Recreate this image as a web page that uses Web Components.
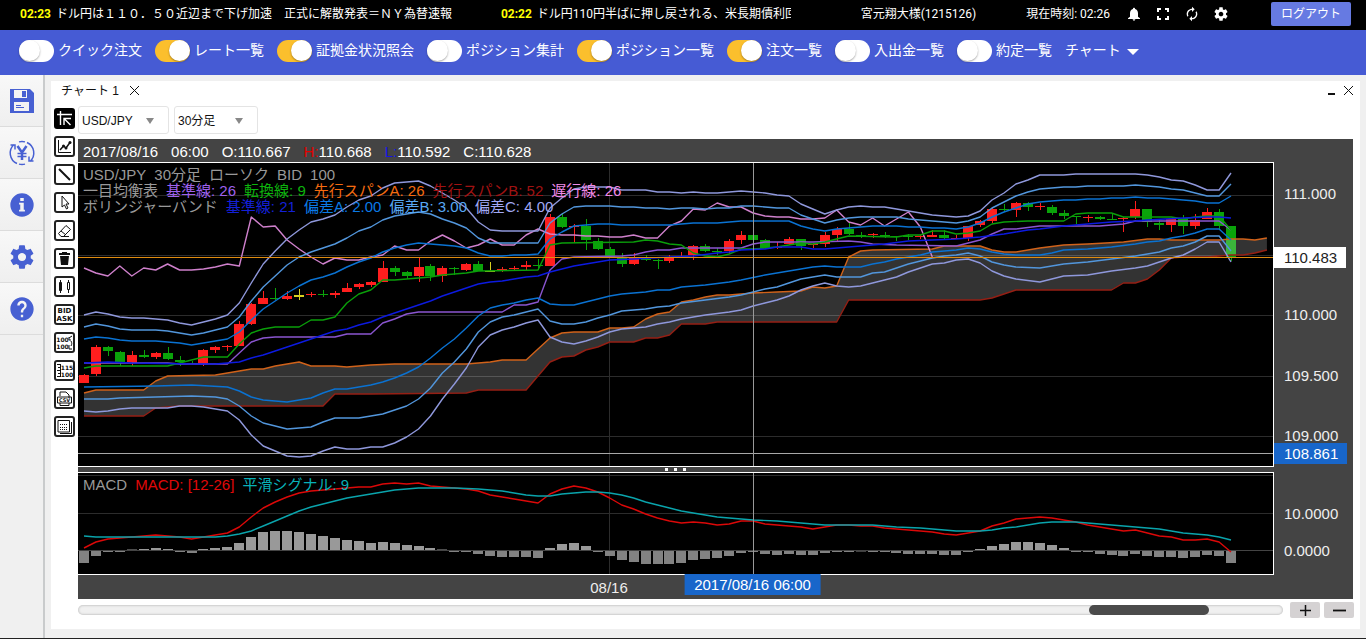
<!DOCTYPE html>
<html lang="ja">
<head>
<meta charset="utf-8">
<title>チャート</title>
<style>
  html, body { margin: 0; height: 100%; }
  body { font-family: Roboto, "Liberation Sans", "Noto Sans CJK JP", sans-serif; font-size: 12px; background: #f0f0f0; color: #222; }
</style>
</head>
<body>
<trade-app></trade-app>

<script>
const define = (name, html, setup) => {
  const template = document.createElement('template');
  template.innerHTML = html;
  customElements.define(name, class extends HTMLElement {
    constructor() {
      super();
      this.attachShadow({ mode: 'open' }).append(template.content.cloneNode(true));
    }
    connectedCallback() { if (setup) setup(this, this.shadowRoot); }
  });
};

const GEAR = 'M19.43 12.98c.04-.32.07-.64.07-.98s-.03-.66-.07-.98l2.11-1.65c.19-.15.24-.42.12-.64l-2-3.46c-.12-.22-.39-.3-.61-.22l-2.49 1c-.52-.4-1.08-.73-1.69-.98l-.38-2.65C14.46 2.18 14.25 2 14 2h-4c-.25 0-.46.18-.49.42l-.38 2.65c-.61.25-1.17.59-1.69.98l-2.49-1c-.23-.09-.49 0-.61.22l-2 3.46c-.13.22-.07.49.12.64l2.11 1.65c-.04.32-.07.65-.07.98s.03.66.07.98l-2.11 1.65c-.19.15-.24.42-.12.64l2 3.46c.12.22.39.3.61.22l2.49-1c.52.4 1.08.73 1.69.98l.38 2.65c.03.24.24.42.49.42h4c.25 0 .46-.18.49-.42l.38-2.65c.61-.25 1.17-.59 1.69-.98l2.49 1c.23.09.49 0 .61-.22l2-3.46c.12-.22.07-.49-.12-.64l-2.11-1.65zM12 15.5c-1.93 0-3.5-1.57-3.5-3.5s1.57-3.5 3.5-3.5 3.5 1.57 3.5 3.5-1.57 3.5-3.5 3.5z';

/* ---------- header ---------- */
define('news-item', `
  <style>
    :host { display: flex; gap: 5px; flex: none; white-space: nowrap; }
    slot[name=time]::slotted(*) { color: #ff0; font-weight: 700; }
  </style>
  <slot name="time"></slot><span><slot></slot></span>`);

define('app-header', `
  <style>
    :host { display: flex; align-items: center; height: 30px; box-sizing: border-box; padding: 0 15px 2px 20px; background: #000; color: #fff; line-height: 16px; }
    .ticker { display: flex; gap: 49px; flex: 1; min-width: 0; overflow: hidden; }
    .user { margin-left: 70px; }
    .clock { margin: 0 16px 0 50px; }
    .user, .clock { white-space: nowrap; }
    .icons { display: flex; gap: 13px; margin-right: 42px; }
    .icons button { all: unset; display: block; width: 16px; height: 16px; }
    svg { display: block; width: 16px; height: 16px; fill: #fff; }
    .logout { width: 80px; height: 24px; padding: 0; border: 0; border-radius: 2px; background: #667ae2; color: #fff; font: inherit; }
  </style>
  <div class="ticker">
    <news-item><time slot="time">02:23</time>ドル円は１１０．５０近辺まで下げ加速　正式に解散発表＝ＮＹ為替速報</news-item>
    <news-item><time slot="time">02:22</time>ドル円110円半ばに押し戻される、米長期債利回</news-item>
  </div>
  <span class="user">宮元翔大様(1215126)</span>
  <span class="clock">現在時刻: 02:26</span>
  <div class="icons">
    <button aria-label="通知"><svg viewBox="0 0 24 24"><path d="M12 22c1.1 0 2-.9 2-2h-4c0 1.1.9 2 2 2zm6-6v-5c0-3.07-1.64-5.64-4.5-6.32V4c0-.83-.67-1.5-1.5-1.5s-1.5.67-1.5 1.5v.68C7.63 5.36 6 7.92 6 11v5l-3 2.5V19.500h18v-1z"/></svg></button>
    <button aria-label="全画面"><svg viewBox="0 0 24 24"><path d="M3 3h6v3H6v3H3zM15 3h6v6h-3V6h-3zM3 15h3v3h3v3H3zM18 15h3v6h-6v-3h3z"/></svg></button>
    <button aria-label="更新"><svg viewBox="0 0 24 24"><path d="M12 6v3l4-4-4-4v3c-4.420 0-8 3.580-8 8 0 1.570.46 3.030 1.240 4.260L6.700 14.800c-.45-.83-.7-1.790-.7-2.800 0-3.310 2.690-6 6-6zm6.760 1.740L17.300 9.200c.44.84.7 1.790.7 2.800 0 3.310-2.690 6-6 6v-3l-4 4 4 4v-3c4.420 0 8-3.580 8-8 0-1.570-.46-3.030-1.240-4.260z"/></svg></button>
    <button aria-label="設定"><svg viewBox="0 0 24 24"><path d="${GEAR}"/></svg></button>
  </div>
  <button class="logout">ログアウト</button>`);

/* ---------- window switches ---------- */
define('toggle-item', `
  <style>
    :host { display: block; }
    label { display: flex; align-items: center; gap: 4px; line-height: 22px; white-space: nowrap; }
    input { appearance: none; margin: 0; width: 35px; height: 22px; border-radius: 11px; background: #fff; display: flex; }
    input::before { content: ""; width: 21px; height: 21px; border-radius: 50%; background: #fff; box-shadow: 0 1px 2px rgba(0,0,0,.35); }
    input:checked { background: #fbbf2d; justify-content: flex-end; }
    span { padding-bottom: 2px; }
  </style>
  <label><input type="checkbox"><span><slot></slot></span></label>`,
  (el, root) => { root.querySelector('input').checked = el.hasAttribute('on'); });

define('app-nav', `
  <style>
    :host { display: flex; align-items: center; gap: 13px; height: 45px; box-sizing: border-box; padding: 0 19px 3px; background: #465bd4; color: #fff; font-size: 14px; }
    button { all: unset; display: flex; align-items: center; gap: 6px; white-space: nowrap; line-height: 22px; }
    button span { padding-bottom: 2px; }
    i { border: 6px solid transparent; border-top: 6px solid #fff; border-bottom: 0; margin-top: 2px; }
  </style>
  <toggle-item>クイック注文</toggle-item>
  <toggle-item on>レート一覧</toggle-item>
  <toggle-item on>証拠金状況照会</toggle-item>
  <toggle-item>ポジション集計</toggle-item>
  <toggle-item on>ポジション一覧</toggle-item>
  <toggle-item on>注文一覧</toggle-item>
  <toggle-item>入出金一覧</toggle-item>
  <toggle-item>約定一覧</toggle-item>
  <button><span>チャート</span><i></i></button>`);

/* ---------- side bar ---------- */
define('side-bar', `
  <style>
    :host { display: block; width: 43px; border-right: 2px solid #c9cbcc; background: #f0f0f0; }
    button { all: unset; display: flex; align-items: center; justify-content: center; width: 43px; height: 52px; box-sizing: border-box; border-bottom: 1px solid #dcdcdc; background: linear-gradient(#f8f8f8, #efefef); }
    svg { width: 28px; height: 28px; fill: #4760d2; }
  </style>
  <button aria-label="保存"><svg viewBox="0 0 28 28"><path fill-rule="evenodd" d="M2 2h20l4 4v20H2zM6 3v8h13V3zM6 15v9h15v-9z"/><path d="M14 4h4v6h-4zM8 18h5v1H8zM8 20h8v1H8z"/></svg></button>
  <button aria-label="入出金"><svg viewBox="0 0 28 28"><g fill="none" stroke="#4760d2"><path stroke-width="1.500" d="M9 24.500A11.500 11.500 0 0 1 6 5.500M19 3.500a11.500 11.500 0 0 1 3 19M11 2.900a11.500 11.500 0 0 1 6 0M17 25.100a11.500 11.500 0 0 1-6 0M2.500 6h4.500v4.500M25.500 22H21v-4.500"/><path stroke-width="2.500" d="M9.500 7l4.500 6.500L18.500 7M14 13v8"/><path stroke-width="1.600" d="M9.500 14.500h9M9.500 17.500h9"/></g></svg></button>
  <button aria-label="情報"><svg viewBox="0 0 24 24"><path d="M12 2a10 10 0 1 0 0 20 10 10 0 0 0 0-20zm2.500 15.500h-5v-1.500h1v-4.500h-1V10h4v6h1zM13.500 8.500h-3V6h3z"/></svg></button>
  <button aria-label="設定"><svg viewBox="0 0 24 24"><path d="${GEAR}"/></svg></button>
  <button aria-label="ヘルプ"><svg viewBox="0 0 24 24"><path d="M12 2C6.480 2 2 6.480 2 12s4.480 10 10 10 10-4.480 10-10S17.520 2 12 2zm1 17h-2v-2h2v2zm2.070-7.750l-.9.920C13.450 12.900 13 13.500 13 15h-2v-.5c0-1.100.45-2.100 1.170-2.830l1.240-1.260c.37-.36.59-.86.59-1.410 0-1.100-.9-2-2-2s-2 .9-2 2H8c0-2.210 1.790-4 4-4s4 1.790 4 4c0 .88-.36 1.680-.93 2.250z"/></svg></button>`);

/* ---------- drawing tools ---------- */
define('tool-button', `
  <style>
    :host { display: block; }
    button { all: unset; display: block; box-sizing: border-box; width: 21px; height: 21px; border: 2px solid #222; border-radius: 3px; background: #fff; overflow: hidden; }
    :host([active]) button { background: #000; border-color: #000; }
    ::slotted(svg) { display: block; width: 17px; height: 17px; }
  </style>
  <button><slot></slot></button>`,
  (el, root) => root.querySelector('button').setAttribute('aria-label', el.getAttribute('label')));

define('tool-column', `
  <style>
    :host { display: flex; flex-direction: column; gap: 7px; }
    svg { fill: none; stroke: #111; stroke-width: 1; }
    text { fill: #111; stroke: none; font: 700 7px "DejaVu Sans", sans-serif; text-anchor: middle; }
  </style>
  <tool-button active label="十字線"><svg viewBox="0 0 17 17" style="stroke:#fff"><path d="M1 4.500h15M4.500 1v14M8 15V8.500h7M8.500 9l6 6" stroke-width="1.400"/></svg></tool-button>
  <tool-button label="テクニカル"><svg viewBox="0 0 17 17"><path d="M2.500 2v12.500H15" /><path d="M4 12l3.500-4 2.500 2 4-5.500" stroke-width="1.500"/><g fill="#111" stroke="none"><circle cx="7.500" cy="8" r="1.500"/><circle cx="10" cy="10" r="1.500"/><circle cx="14" cy="4.500" r="1.500"/></g></svg></tool-button>
  <tool-button label="直線"><svg viewBox="0 0 17 17"><path d="M3 3l11 11" stroke-width="2"/></svg></tool-button>
  <tool-button label="選択"><svg viewBox="0 0 17 17"><path d="M6 2v11l2.500-2 2 4 1.500-1-2-4h3z"/></svg></tool-button>
  <tool-button label="消去"><svg viewBox="0 0 17 17"><path d="M2.500 11.500L10 3.500l4.500 4-7 7H5zM5 9l5 4M5 14.500h8"/></svg></tool-button>
  <tool-button label="全削除"><svg viewBox="0 0 17 17"><path fill="#111" stroke="none" d="M3 3h3V2h5v1h3v2H3zM4 6h9l-1 9H5z"/></svg></tool-button>
  <tool-button label="チャート種類"><svg viewBox="0 0 17 17"><path d="M4.500 2v13M12.500 2v13"/><path d="M3.500 4.500h2v8h-2z" fill="#111"/><path d="M11.500 4.500h2v7h-2z" fill="#fff"/></svg></tool-button>
  <tool-button label="BID ASK"><svg viewBox="0 0 17 17"><text x="8.500" y="7">BID</text><text x="8.500" y="15">ASK</text></svg></tool-button>
  <tool-button label="価格範囲"><svg viewBox="0 0 17 17"><text x="6.500" y="8" style="font-size:6px">100</text><text x="6.500" y="15" style="font-size:6px">100</text><path d="M13 4l3-2M13 3v3h2M15 7c1 2 1 3 0 5M13 11v4h3" /></svg></tool-button>
  <tool-button label="価格目盛"><svg viewBox="0 0 17 17"><text x="11" y="8" style="font-size:6px">115</text><text x="11" y="15" style="font-size:6px">100</text><path d="M1 2.500h3M2 5.500h2M1 8.500h3M2 11.500h2M1 14.500h3M4.500 2v13"/></svg></tool-button>
  <tool-button label="CSV"><svg viewBox="0 0 17 17"><path d="M4 6V2h6l3 3v3M4 13v2.500h9V13M1.500 7v6h14V7z"/><text x="8.500" y="12" style="font-size:5px">CSV</text></svg></tool-button>
  <tool-button label="表示設定"><svg viewBox="0 0 17 17"><path d="M2 2.500h11.500v11.500H2zM4 15.500h11.500V4"/><path d="M4 6.500h8M4 9.500h8M4 11.500h8" stroke-dasharray="1 1"/></svg></tool-button>`);

/* ---------- chart data: bar index, height on the canvas ---------- */
const STEP = 11.948, FIRST = 84;
const X = i => FIRST + i * STEP;

// Values for consecutive bars starting at bar 0; "n*y" repeats y for n bars.
const run = text => text.trim().split(/\s+/).flatMap(t => {
  const [n, y] = t.split('*');
  return y === undefined ? [+n] : Array(+n).fill(+y);
});
// Sparse "bar:y" list, joined by straight segments.
const sparse = text => text.trim().split(/\s+/).map(t => t.split(':').map(Number));
const dense = text => run(text).map((y, i) => [i, y]);
const points = list => list.map(([i, y]) => X(i).toFixed(1) + ',' + y).join(' ');

const upperC = dense(`315 312 314 317 318 318 319 320 323 325 322 319 315 303 283 264 251 239 230 222 219 215 207 200 196
 188 183 182 181 186 193 200 208 222 230 231 231 231 231 208 198 189 187 187 187 190 190 190 192 192
 193 192 193 193 192 191 192 193 195 196 204 209 214 210 207 206 207 207 209 211 213 215 216 217
 216 211 200 193 184 180 175 175 175 174 174 174 174 174 174 175 177 180 181 185 190 190 173`);
const upperB = dense(`327 324 326 329 330 330 330 331 333 335 333 330 327 317 301 287 276 265 257 252 248 244 238 231 227
 220 216 214 212 214 219 223 228 238 243 243 243 243 243 223 214 207 206 206 206 207 207 208 208 209
 208 208 209 208 208 206 206 207 208 208 215 219 223 220 218 217 217 217 217 219 220 221 222 223
 221 217 208 202 196 192 189 188 187 187 186 186 186 186 185 186 187 189 190 193 196 196 184`);
const upperA = dense(`339 337 338 340 341 341 341 342 343 345 343 341 339 332 320 309 301 293 286 280 277 273 267 262 258
 252 248 245 243 244 245 246 248 253 256 256 255 255 254 239 232 226 225 224 224 225 225 225 225 225
 224 223 223 223 222 221 221 221 221 221 226 229 231 229 228 227 226 226 226 227 227 228 228 229
 227 223 217 212 208 204 202 201 200 200 199 199 198 198 197 198 198 199 200 201 203 203 196`);
const middle = sparse(`0:363 2:362 4:363 9:364 11:364 12:363 13:362 14:358 15:355 16:351 17:347 18:343 19:339 20:335 21:331 22:329 23:325 24:322
 25:317 26:313 27:309 28:305 29:301 30:296 31:292 32:288 33:284 34:282 35:281 36:279 37:277 38:276 39:272 40:269 41:266 42:264 43:262 44:260 46:259
 49:257 51:256 53:253 54:252 55:250 57:249 58:247 60:247 61:249 62:249 63:248 65:246 67:244 69:241 71:240 73:239 75:237 77:234 78:232 79:230 80:229
 82:226 84:224 86:222 88:221 89:220 92:218 94:217 95:217 96:218`);
const lowerA = sparse(`0:387 6:386 9:385 12:387 13:391 14:397 15:400 17:402 18:400 19:398 20:393 21:389 22:389 23:387 24:385
 25:382 26:378 27:373 28:367 29:358 30:348 31:339 32:328 33:316 34:308 35:305 36:303 37:300 38:298 39:304 40:305 41:305 42:302 43:299 44:296 45:294
 46:293 47:292 48:290 49:290 50:287 52:285 54:282 55:280 57:275 59:271 60:269 61:267 62:266 63:267 65:267 66:264 67:262 68:259 69:257 70:255 71:252
 72:251 73:250 74:248 75:249 76:252 77:254 78:255 80:255 81:253 82:250 84:249 86:247 88:244 89:242 90:241 91:238 92:236 93:233 94:229 95:229 96:240`);
const lowerB = sparse(`0:399 2:399 3:398 6:397 9:396 11:397 12:399 13:406 14:416 15:423 16:426 17:429 18:428 19:427 20:422 21:418 23:418 24:416
 25:414 26:410 27:406 28:399 29:388 30:373 31:362 32:349 33:332 34:322 35:317 36:315 37:312 38:309 39:321 40:324 41:324 42:322 43:318 44:315 45:311
 47:309 48:307 49:306 50:303 52:300 54:297 55:295 56:292 57:289 58:287 59:283 60:279 61:277 62:275 63:277 65:277 66:273 67:272 68:268 69:264 70:261
 71:258 72:256 73:255 74:253 75:256 76:262 77:265 78:267 80:268 81:266 82:264 84:262 86:259 88:256 89:254 90:252 91:248 92:246 93:242 94:236 95:236 96:251`);
const lowerC = sparse(`0:411 1:412 2:411 3:409 4:408 7:408 8:406 9:406 10:407 12:411 13:420 14:435 15:446 16:451 17:456 18:457 19:456 20:451 21:447 22:449 23:449
 24:447 25:447 26:443 27:437 28:429 29:416 30:399 31:384 32:368 33:347 34:335 35:330 36:327 37:323 38:320 39:337 40:342 41:344 42:341 43:337 44:332
 45:329 47:327 48:324 49:322 50:319 52:315 54:312 55:310 56:306 57:303 58:300 59:296 60:290 61:286 62:283 63:286 64:287 65:286 66:283 67:280 68:277
 69:272 70:268 71:264 72:263 73:260 74:259 75:263 76:271 77:276 78:279 80:282 81:279 82:276 84:275 86:271 88:268 89:266 90:262 91:258 92:255 93:249 94:242 95:242 96:262`);
const tenkan = sparse(`0:368 1:366 7:366 8:363 9:360 10:357 12:357 13:344 14:333 15:329 16:327 18:327 19:320 20:320 21:317 22:303 23:294 24:290
 25:280 26:280 28:278 29:277 30:275 32:273 33:271 38:270 39:245 40:243 46:242 47:240 48:241 49:244 50:245 51:253 52:256 53:257 54:254 55:249 56:249
 58:247 59:245 60:243 61:244 62:242 63:239 64:236 68:237 69:235 70:235 71:231 72:231 73:234 74:233 75:231 76:224 77:222 79:221 82:221 83:214 84:213
 86:213 87:217 91:217 92:219 93:217 94:216 95:216 96:230`);
const kijun = sparse(`0:363 7:363 8:364 12:364 13:353 14:342 15:338 16:337 21:337 22:334 24:334 25:323 26:319 27:314 28:312 35:312 36:305 37:305
 38:302 39:270 40:259 41:257 45:256 46:255 47:252 48:250 49:250 50:248 55:248 56:244 57:242 61:242 64:241 65:242 66:244 68:245 73:246 74:243 75:240
 76:234 77:229 78:229 80:226 85:226 86:225 87:224 88:221 95:221 96:230`);
const chikou = dense(`268 273 276 266 276 268 270 264 270 270 269 267 264 266 217 227 226 240 249 257 264 258 260 260 257
 255 246 250 250 241 235 241 248 245 239 245 245 235 229 234 235 235 236 236 237 237 235 238 238 226
 221 209 210 203 207 207 213 216 217 217 219 219 218 210 222 225 218 226 219 212 227 257`);
const spanA = sparse(`0:393 1:390 5:390 6:381 7:376 11:375 12:373 13:371 14:369 15:369 16:366 17:364 18:362 19:366 21:366 22:367 24:365 26:364
 32:364 34:362 35:360 37:360 38:349 39:338 40:333 41:332 43:332 44:328 45:328 46:327 47:319 48:314 49:312 50:302 51:300 52:297 53:295 54:295 55:294
 56:293 58:292 60:291 61:287 62:288 63:286 64:257 65:251 66:250 71:249 72:246 75:246 76:250 77:252 78:252 80:248 82:245 84:244 87:242 89:239 90:239
 91:240 95:240 96:239 97:239 98:240 99:238`);
const spanB = sparse(`0:416 5:416 6:408 8:406 20:406 21:394 24:394 32:393 33:390 37:390 38:376 39:362 40:357 41:356 42:350 43:347 44:342 46:342
 47:338 48:338 49:335 50:324 52:324 53:322 63:322 64:300 75:300 76:298 77:294 78:290 86:290 87:283 88:283 89:279 90:270 91:258 92:257 94:257 96:255
 97:255 98:253 99:250`);

// colour, body top, body bottom, high, low
const candles = `r 375 383 374 383|r 347 374 345 376|g 347 351 346 356|g 352 362 351 366|r 355 363 351 366|g 355 357 350 358|r 353 357 352 359|g 353 359 347 360
 |g 360 362 356 366|g 363 364 361 364|r 350 364 349 366|r 347 350 346 353|r 346 347 345 351|r 324 346 321 346|r 304 324 303 325|r 298 304 291 304
 |g 298 299 288 300|r 296 299 291 300|y 295 297 289 300|r 294 295 292 297|g 294 295 290 297|r 293 295 291 298|r 288 292 283 292|r 284 287 283 289
 |r 282 285 281 287|r 268 282 261 282|g 268 272 266 276|g 272 276 271 279|r 267 276 258 282|g 266 276 264 281|r 268 276 266 282|g 268 269 267 275
 |r 264 270 263 271|g 264 271 261 271|y 271 271 262 272|r 269 270 267 272|r 268 269 266 271|r 265 267 261 270|g 265 266 259 270|r 217 266 214 266
 |g 217 227 214 228|r 226 227 224 243|g 226 240 219 250|g 241 249 238 250|g 249 257 247 258|g 258 264 253 267|r 258 264 253 265|g 259 260 255 261
 |g 260 261 259 269|r 257 261 255 263|r 256 257 252 258|r 246 255 245 260|g 246 251 244 252|g 251 252 248 255|r 241 251 239 253|r 235 240 231 244
 |g 235 240 235 241|g 240 248 239 249|r 247 248 242 249|r 239 244 237 245|g 239 246 239 250|r 244 245 243 248|r 235 244 232 247|r 229 235 227 241
 |g 229 234 222 235|g 235 236 232 238|r 234 235 233 238|g 235 236 232 238|g 236 237 236 241|g 236 237 234 240|r 236 237 235 239|r 235 237 230 237
 |g 235 238 230 239|r 238 239 235 239|r 226 238 226 241|r 221 225 220 227|r 209 221 208 223|g 209 210 204 212|r 203 210 202 217|g 203 207 202 211
 |r 206 207 203 210|g 207 213 205 215|g 213 216 210 219|g 216 217 216 224|r 217 218 215 222|g 217 219 216 220|g 219 220 214 220|r 218 219 217 232
 |r 209 217 201 219|g 209 222 209 227|g 223 225 220 230|r 219 225 219 232|g 219 226 215 234|r 220 226 214 229|r 212 219 208 219|g 212 226 209 229|g 226 257 226 261`
  .split('|').map(c => { const [k, ...v] = c.trim().split(/\s+/); return [k, ...v.map(Number)]; });

const macd = dense(`548 542 539 538 537 536 535 536 537 539 537 535 533 527 517 508 502 497 493 491 490 489 488 487 487 484 483 484 483 486 487 488 489 491
 495 497 499 501 503 494 489 486 488 492 498 505 509 514 518 521 523 522 523 525 524 521 521 524 525 526 527 529 527 525 525 526 526 528 529 530 531 532
 534 535 533 531 526 523 519 518 517 518 520 522 525 527 529 531 530 533 536 537 540 540 539 542 552`);
const signal = sparse(`0:536 1:537 5:537 8:537 9:537 11:537 12:536 13:534 14:531 15:526 16:521 17:516 18:511 19:507 20:504 21:501 22:498 23:496 24:494 25:492
 26:490 27:489 28:488 31:488 33:489 34:490 35:491 36:493 37:495 38:496 39:496 40:494 41:493 42:492 43:492 44:493 45:495 46:498 47:502 48:505 49:508 50:511
 51:513 52:515 53:517 54:518 56:520 58:521 60:523 62:525 66:525 68:527 70:528 72:530 73:531 75:531 76:530 77:528 78:527 79:525 80:523 81:522 83:522 84:523
 86:525 87:526 88:527 90:529 91:531 92:533 93:534 94:535 95:537 96:540`);
const histogram = run(`-12 -5 -1 -1 .5 1 2 1 -1 -2 1 2 3 7 13 18 19 19 18 16 14 12 10 9 7 8 7 5 4 2 .5 -1 -1 -3 -5 -6 -6 -6 -7 2 6 7 4 -1 -5 -9 -11 -13 -13 -13
 -12 -9 -8 -7 -5 -2 -1 -3 -4 -3 -4 -4 -2 -1 -1 -.5 -1 -1 -2 -3 -3 -3 -4 -4 -1 1 4 6 8 8 7 5 2 -1 -1 -3 -4 -5 -3 -5 -6 -6 -7 -6 -4 -5 -12`);

const line = (list, colour) => `<polyline points="${points(list)}" stroke="${colour}"/>`;
const SVG_STYLE = `
    :host { display: block; position: relative; min-width: 0; overflow: hidden; background: #000; border: 1px solid #fff; border-left: 0; }
    svg { position: absolute; inset: 0; width: 100%; height: 100%; }
    polyline { fill: none; stroke-width: 1.4; stroke-linejoin: round; vector-effect: non-scaling-stroke; }
    .legend { position: relative; padding: 0 5px; font-size: 15px; line-height: 16px; white-space: nowrap; color: #999; }
    .legend div { display: flex; gap: 8px; }`;

/* ---------- price plot ---------- */
define('price-plot', `
  <style>${SVG_STYLE} .legend { padding-top: 4px; } </style>
  <svg viewBox="78 163 1195 303" preserveAspectRatio="none"></svg>
  <div class="legend">
    <div><span>USD/JPY</span><span>30分足</span><span>ローソク</span><span>BID</span><span>100</span></div>
    <div><span>一目均衡表</span><span style="color:#9f62ee">基準線: 26</span><span style="color:#0db50d">転換線: 9</span><span style="color:#f56b10">先行スパンA: 26</span><span style="color:#a01212">先行スパンB: 52</span><span style="color:#f08ae8">遅行線: 26</span></div>
    <div><span>ボリンジャーバンド</span><span style="color:#1420d8">基準線: 21</span><span style="color:#0a7ae6">偏差A: 2.00</span><span style="color:#58a8f4">偏差B: 3.00</span><span style="color:#a0a8f4">偏差C: 4.00</span></div>
  </div>`, (el, root) => {
  const colours = { r: '#ff1e1e', g: '#0aa30a', y: '#d8d020' };
  const bars = candles.map(([k, top, bottom, high, low], i) => {
    const c = colours[k], x = Math.round(X(i));
    return `<rect x="${x}" y="${high}" width="1" height="${low - high}" fill="${c}"/><rect x="${x - 5}" y="${top}" width="10" height="${Math.max(bottom - top, 1)}" fill="${c}"/>`;
  }).join('');
  root.querySelector('svg').innerHTML = `
    <path d="M78 195.500H1273M78 255.500H1273M78 315.500H1273M78 376.500H1273M78 436.500H1273M609.500 163V466" stroke="#2c2c2c"/>
    ${bars}
    <polygon points="${points(spanA)} ${points([...spanB].reverse())}" fill="#fff" fill-opacity=".2"/>
    ${line(spanB, '#951f14')}${line(spanA, '#d0621a')}${line(chikou, '#cf80cc')}
    ${line(kijun, '#8a55d0')}${line(tenkan, '#0a9e0a')}${line(middle, '#0c1ae0')}
    ${line(lowerA, '#0a72d2')}${line(upperA, '#0a72d2')}${line(lowerB, '#5296dc')}${line(upperB, '#5296dc')}${line(lowerC, '#8f98dc')}${line(upperC, '#8f98dc')}
    <path d="M78 257.500H1273" stroke="#e08c10"/>
    <path d="M78 453.500H1273" stroke="#a8a8a8"/><path d="M753.500 163V466" stroke="#999"/>`;
});

/* ---------- MACD plot ---------- */
define('macd-plot', `
  <style>${SVG_STYLE} .legend { padding-top: 4px; } </style>
  <svg viewBox="78 473 1195 101" preserveAspectRatio="none"></svg>
  <div class="legend"><div><span>MACD</span><span style="color:#e00808">MACD: [12-26]</span><span style="color:#08b0b8">平滑シグナル: 9</span></div></div>`,
  (el, root) => {
  const bars = histogram.map((h, i) => {
    const x = Math.round(X(i)) - 5, size = Math.abs(h);
    return `<rect x="${x}" y="${h > 0 ? 550 - size : 551}" width="10" height="${size}" fill="${h > 0 ? '#999' : '#828282'}"/>`;
  }).join('');
  root.querySelector('svg').innerHTML = `
    <path d="M78 475.500H1273M78 513.500H1273M609.500 473V574" stroke="#2c2c2c"/><path d="M78 550.500H1273" stroke="#444"/>
    ${bars}${line(macd, '#dc0808')}${line(signal, '#0aa4ac')}<path d="M753.500 473V574" stroke="#999"/>`;
});

/* ---------- axes ---------- */
define('value-axis', `
  <style>
    :host { display: block; position: relative; color: #eee; font-size: 15px; }
    span { position: absolute; left: 0; box-sizing: border-box; height: 21px; margin-top: -10px; padding: 0 9px 0 10px; line-height: 21px; }
    .last { background: #fff; color: #222; }
    .cursor { background: #1866ca; color: #fff; }
  </style>`, (el, root) => {
  for (const entry of el.getAttribute('ticks').split(' ')) {
    const [text, at, kind] = entry.split('@');
    const label = document.createElement('span');
    label.textContent = text;
    label.style.top = at + '%';
    if (kind) label.className = kind;
    root.append(label);
  }
});

define('time-axis', `
  <style>
    :host { display: block; position: relative; color: #eee; font-size: 15px; }
    span { position: absolute; top: 2px; transform: translateX(-50%); line-height: 21px; white-space: nowrap; }
    .cursor { top: -1px; padding: 0 10px; background: #1866ca; color: #fff; }
  </style>
  <span style="left:44.400%">08/16</span><span class="cursor" style="left:56.400%">2017/08/16 06:00</span>`);

define('price-chart', `
  <style>
    :host { display: grid; grid-template-columns: minmax(0, 1fr) 79px; grid-template-rows: 23px minmax(200px, 1fr) 5px 103px 24px; background: #444; font-family: "Liberation Sans", "Noto Sans CJK JP", sans-serif; }
    .quote { grid-column: 1 / -1; display: flex; gap: 13px; padding-left: 5px; font-size: 15px; line-height: 25px; color: #fff; }
    .quote b { font-weight: 400; }
    .grip { grid-column: 1 / -1; display: flex; gap: 6px; align-items: center; justify-content: center; padding-right: 80px; }
    .grip i { width: 3px; height: 3px; background: #fff; }
  </style>
  <div class="quote"><span>2017/08/16</span><span>06:00</span><span>O:110.667</span><span><b style="color:#e00000">H:</b>110.668</span><span><b style="color:#1414e8">L:</b>110.592</span><span>C:110.628</span></div>
  <price-plot></price-plot>
  <value-axis ticks="111.000@10.3 110.000@49.8 109.500@69.7 109.000@89.6 110.483@31@last 108.861@95.4@cursor"></value-axis>
  <div class="grip"><i></i><i></i><i></i></div>
  <macd-plot></macd-plot>
  <value-axis ticks="10.0000@40 0.0000@76"></value-axis>
  <time-axis></time-axis>`);

/* ---------- panel ---------- */
define('chart-panel', `
  <style>
    :host { display: flex; flex-direction: column; background: #fff; font-family: "Liberation Sans", "Noto Sans CJK JP", sans-serif; }
    header { display: flex; align-items: center; height: 25px; box-sizing: border-box; padding: 0 6px 6px 10px; line-height: 18px; color: #111; }
    h1 { font: inherit; margin: 0 10px 0 0; }
    header button { all: unset; width: 11px; height: 11px; }
    header .min { margin: 0 5px 0 auto; }
    svg { display: block; width: 11px; height: 11px; fill: none; stroke: #111; }
    .body { display: flex; flex: 1; padding: 0 6px 0 3px; gap: 3px; }
    tool-column { padding-top: 2px; flex: none; }
    .work { flex: 1; min-width: 0; display: flex; flex-direction: column; }
    .selects { display: flex; gap: 5px; margin-bottom: 5px; }
    select { appearance: none; box-sizing: border-box; height: 28px; margin: 0; padding: 2px 4px 0 3px; border: 1px solid #e4e4e4; border-radius: 3px; font: inherit; color: #111; background: #fff; }
    .field { position: relative; display: flex; }
    .field::after { content: ""; position: absolute; right: 15px; top: 12px; border: 4px solid transparent; border-top: 6px solid #888; border-bottom: 0; pointer-events: none; }
    .pair { width: 91px; } .term { width: 84px; }
    price-chart { flex: 1; margin-right: 1px; }
    .scroll { display: flex; align-items: center; gap: 4px; height: 16px; padding: 3px 0 11px; }
    input { appearance: none; flex: 1; min-width: 0; height: 10px; margin: 0 3px 0 0; border-radius: 5px; background: #f0f0f0; box-shadow: inset 0 0 2px 1px #ccc; }
    input::-webkit-slider-thumb { appearance: none; width: 120px; height: 10px; border-radius: 5px; background: #4b4b4b; }
    .scroll button { padding: 0; width: 30px; height: 16px; border: 0; border-radius: 2px; background: #d5d2d3; display: grid; place-items: center; }
  </style>
  <header><h1>チャート 1</h1>
    <button aria-label="タブを閉じる"><svg viewBox="0 0 11 11"><path d="M1 1l9 9M10 1l-9 9"/></svg></button>
    <button class="min" aria-label="最小化"><svg viewBox="0 0 11 11"><path d="M1 9h7" stroke-width="2"/></svg></button>
    <button aria-label="閉じる"><svg viewBox="0 0 11 11"><path d="M1 1l9 9M10 1l-9 9"/></svg></button>
  </header>
  <div class="body">
    <tool-column></tool-column>
    <div class="work">
      <div class="selects">
        <div class="field"><select class="pair" aria-label="通貨ペア"><option>USD/JPY</option></select></div>
        <div class="field"><select class="term" aria-label="足種"><option>30分足</option></select></div>
      </div>
      <price-chart></price-chart>
      <div class="scroll">
        <input type="range" min="0" max="1000" value="932" aria-label="表示位置">
        <button aria-label="拡大"><svg viewBox="0 0 11 11"><path d="M0 5.500h11M5.500 0v11" stroke-width="1.500"/></svg></button>
        <button aria-label="縮小"><svg viewBox="0 0 11 11" style="width:13px"><path d="M-1 5.500h13" stroke-width="1.800"/></svg></button>
      </div>
    </div>
  </div>`);

define('trade-app', `
  <style>
    :host { display: flex; flex-direction: column; min-height: 100vh; box-sizing: border-box; border-bottom: 1px solid #222; }
    main { display: flex; flex: 1; }
    side-bar { flex: none; }
    chart-panel { flex: 1; min-width: 0; margin: 6px 6px 9px; }
  </style>
  <app-header></app-header>
  <app-nav></app-nav>
  <main><side-bar></side-bar><chart-panel></chart-panel></main>`);
</script>
</body>
</html>
